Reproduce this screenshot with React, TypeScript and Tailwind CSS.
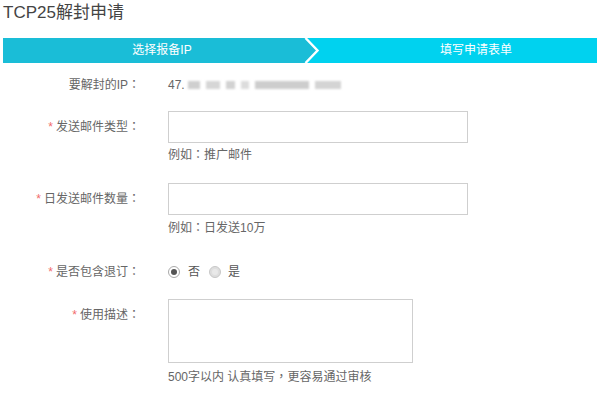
import React from "react";

const font = { fontFamily: '"Liberation Sans", "Noto Sans CJK SC", sans-serif' };
const tc = { fontFamily: '"Noto Sans CJK TC", sans-serif' };

function C({ ch = "：" }: { ch?: string }) {
  return (
    <span className="leading-none" style={tc}>
      {ch}
    </span>
  );
}

function Label({ text, required = true }: { text: string; required?: boolean }) {
  return (
    <div className="h-[20px] w-[140px] shrink-0 text-right text-[12px] leading-[20px] text-[#666]">
      {required && <span className="mr-[3px] text-[#f26b6b]">*</span>}
      {text}
      <C />
    </div>
  );
}

export default function App() {
  return (
    <div className="w-[600px] h-[400px] bg-white overflow-hidden" style={font}>
      <div className="px-[3px]">
        <div className="text-[17px] leading-[26px] text-[#444]">TCP25解封申请</div>
        <div className="mt-[12px] flex h-[25px] text-[12px] leading-[25px] text-white">
          <div className="w-[299px] bg-[#1abdd7] text-center pl-[19px]">选择报备IP</div>
          <svg width="20" height="25" viewBox="0 0 20 25" className="block shrink-0 bg-[#00d2ef]">
            <polygon points="0,0 2,0 14,12.5 2,25 0,25" fill="#1abdd7" />
            <polyline points="3.5,0 15.5,12.5 3.5,25" fill="none" stroke="#ffffff" strokeWidth="2.4" />
          </svg>
          <div className="flex-1 bg-[#00d2ef] text-center pl-[33px]">填写申请表单</div>
        </div>
      </div>

      {/* IP row */}
      <div className="mt-[12px] flex items-center h-[20px]">
        <Label text="要解封的IP" required={false} />
        <div className="ml-[28px] flex items-center text-[12px] text-[#666]">
          <span>47.</span>
          <div className="ml-[3px] flex items-center gap-[6px] blur-[1.2px]">
            <span className="block h-[8px] w-[12px] bg-[#cfcfcf]" />
            <span className="block h-[8px] w-[14px] bg-[#d6d6d6]" />
            <span className="block h-[8px] w-[9px] bg-[#d2d2d2]" />
            <span className="block h-[8px] w-[8px] bg-[#dcdcdc]" />
            <span className="block h-[8px] w-[54px] bg-[#cdcdcd]" />
            <span className="block h-[8px] w-[26px] bg-[#d4d4d4]" />
          </div>
        </div>
      </div>

      {/* mail type */}
      <div className="mt-[16px] flex h-[32px] items-center">
        <Label text="发送邮件类型" />
        <div className="ml-[28px] h-[32px] w-[300px] border border-[#cfcfcf] bg-white" />
      </div>
      <div className="mt-[3px] h-[18px] pl-[168px] text-[12px] leading-[18px] text-[#666]">
        例如<C />推广邮件
      </div>

      {/* daily amount */}
      <div className="mt-[19px] flex h-[32px] items-center">
        <Label text="日发送邮件数量" />
        <div className="ml-[28px] h-[32px] w-[300px] border border-[#cfcfcf] bg-white" />
      </div>
      <div className="mt-[4px] h-[18px] pl-[168px] text-[12px] leading-[18px] text-[#666]">
        例如<C />日发送10万
      </div>

      {/* unsubscribe */}
      <div className="mt-[25px] flex items-center h-[20px]">
        <Label text="是否包含退订" />
        <div className="ml-[28px] flex items-center text-[12px] text-[#555]">
          <span className="flex h-[12px] w-[12px] items-center justify-center rounded-full border border-[#aaa] bg-white">
            <span className="block h-[6px] w-[6px] rounded-full bg-[#555]" />
          </span>
          <span className="ml-[8px]">否</span>
          <span className="ml-[9px] flex h-[12px] w-[12px] items-center justify-center rounded-full border border-[#c8c8c8] bg-[#dedede]">
            <span className="block h-[6px] w-[6px] rounded-full bg-[#e9e9e9]" />
          </span>
          <span className="ml-[7px]">是</span>
        </div>
      </div>

      {/* description */}
      <div className="mt-[17px] flex items-start">
        <div className="pt-[6px]">
          <Label text="使用描述" />
        </div>
        <div className="ml-[28px] h-[64px] w-[245px] border border-[#cfcfcf] bg-white" />
      </div>
      <div className="mt-[5px] h-[18px] pl-[168px] text-[12px] leading-[18px] text-[#666]">
        500字以内 认真填写<C ch="，" />更容易通过审核
      </div>
    </div>
  );
}
